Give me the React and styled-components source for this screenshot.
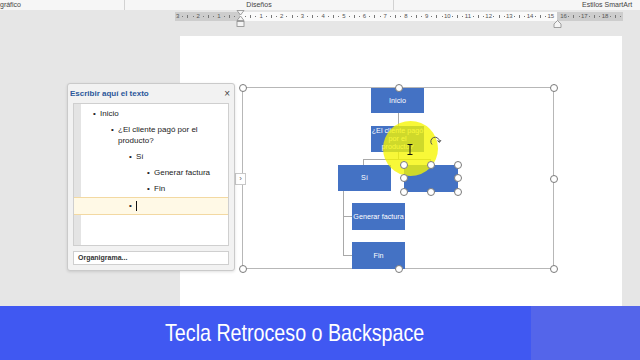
import styled, { createGlobalStyle } from 'styled-components';

const GlobalStyle = createGlobalStyle`
  * { box-sizing: border-box; }
  body { margin: 0; font-family: "Liberation Sans", Arial, sans-serif; }
`

const Screen = styled.div`
  width: 640px;
  height: 360px;
  display: flex;
  flex-direction: column;
  overflow: hidden;
  background: #e6e6e6;
`

// ribbon labels
const TopBar = styled.div`
  height: 10px;
  display: flex;
  background: #f6f6f6;
  font-size: 7px;
  line-height: 10px;
  color: #444;
`
const TopGroup = styled.div`
  width: ${p => p.$w ? p.$w + 'px' : 'auto'};
  flex: ${p => p.$w ? 'none' : 1};
  text-align: ${p => p.$align || 'left'};
  padding-left: ${p => p.$pad || 0}px;
  border-left: ${p => p.$sep ? '1px solid #d2d2d2' : 'none'};
  white-space: nowrap;
  overflow: hidden;
`

// ruler
const RulerRow = styled.div`
  height: 26px;
  position: relative;
  background: #e6e6e6;
  padding-top: 2px;
`
const Ruler = styled.div`
  margin-left: 175px;
  width: 446px;
  height: 9px;
  display: flex;
  font-size: 6px;
  line-height: 9px;
  color: #555;
`
const RulerSeg = styled.div`
  display: flex;
  width: ${p => p.$w ? p.$w + 'px' : 'auto'};
  flex: ${p => p.$w ? 'none' : 1};
  padding-left: ${p => p.$pad || 0}px;
  background: ${p => p.$light ? '#fafafa' : '#cdcdcd'};
`
const Cell = styled.div`
  width: 20.7px;
  flex: none;
  display: flex;
`
const Slot = styled.span`
  width: 25%;
  display: flex;
  align-items: center;
  justify-content: center;
`
const Dot = styled.i`
  width: 1px;
  height: 1px;
  background: #777;
`
const Tick = styled.i`
  width: 1px;
  height: 3px;
  background: #777;
`
const Marker = styled.svg`
  position: absolute;
  left: ${p => p.$x}px;
  top: ${p => p.$y}px;
`

// document area
const Workspace = styled.div`
  flex: 1;
  position: relative;
  display: flex;
  padding-left: 180px;
  background: #e6e6e6;
`
const Page = styled.div`
  width: 442px;
  background: #fff;
  padding: 51px 0 0 62px;
`
const Frame = styled.div`
  position: relative;
  width: 312px;
  height: 182px;
  border: 1px solid #b7b7b7;
`
const Node = styled.div`
  position: absolute;
  left: ${p => p.$x}px;
  top: ${p => p.$y}px;
  width: ${p => p.$w || 53}px;
  height: ${p => p.$h || 26}px;
  background: #4472c4;
  color: #fff;
  font-size: 7.2px;
  line-height: 8px;
  display: flex;
  align-items: center;
  justify-content: center;
  text-align: center;
`
const Line = styled.div`
  position: absolute;
  left: ${p => p.$x}px;
  top: ${p => p.$y}px;
  width: ${p => p.$w || 1}px;
  height: ${p => p.$h || 1}px;
  background: #a9a9a9;
`
const Handle = styled.span`
  position: absolute;
  left: ${p => p.$x - 4}px;
  top: ${p => p.$y - 4}px;
  width: 8px;
  height: 8px;
  border-radius: 50%;
  border: 1px solid #7a7a7a;
  background: #fff;
  z-index: 3;
`
const Spot = styled.div`
  position: absolute;
  left: 140px;
  top: 33px;
  width: 55px;
  height: 55px;
  border-radius: 50%;
  background: rgba(246, 246, 0, 0.78);
  z-index: 2;
`
const Overlay = styled.svg`
  position: absolute;
  left: ${p => p.$x}px;
  top: ${p => p.$y}px;
  z-index: 4;
`
const ExpandTab = styled.div`
  position: absolute;
  left: -8px;
  top: 85px;
  width: 11px;
  height: 12px;
  background: #fff;
  border: 1px solid #c8c8c8;
  color: #666;
  font-size: 8px;
  line-height: 10px;
  text-align: center;
  z-index: 3;
`

// text pane
const TextPane = styled.div`
  position: absolute;
  left: 67px;
  top: 47px;
  width: 168px;
  height: 188px;
  display: flex;
  flex-direction: column;
  padding: 0 5px 5px;
  background: #f2f2f2;
  border: 1px solid #cacaca;
  border-radius: 3px;
  box-shadow: 0 1px 3px rgba(0,0,0,0.12);
  z-index: 5;
`
const PaneHeader = styled.div`
  height: 19px;
  display: flex;
  align-items: center;
  justify-content: space-between;
  margin: 0 -3px;
`
const PaneTitle = styled.span`
  font-size: 8px;
  font-weight: bold;
  color: #2b579a;
`
const Close = styled.span`
  font-size: 10px;
  color: #444;
  padding-right: 2px;
`
const InnerBox = styled.div`
  height: 144px;
  background: #fff;
  border: 1px solid #cfcfcf;
  display: flex;
  flex-direction: column;
`
const List = styled.div`
  flex: 1;
  border-left: 7px solid #e4e4e4;
  padding-top: 2px;
  font-size: 8px;
  color: #222;
`
const Item = styled.div`
  display: flex;
  line-height: 11px;
  padding: 2.5px 0 2.5px ${p => 12 + p.$level * 18 + (p.$active ? 7 : 0)}px;
  margin-left: ${p => p.$active ? -7 : 0}px;
  background: ${p => p.$active ? '#fff9e6' : 'transparent'};
  border-top: ${p => p.$active ? '1px solid #f3d9a2' : 'none'};
  border-bottom: ${p => p.$active ? '1px solid #f3d9a2' : 'none'};
  &::before {
    content: "•";
    width: 7px;
    flex: none;
  }
`
const ItemText = styled.span`
  max-width: 92px;
`
const Caret = styled.i`
  width: 1px;
  height: 10px;
  background: #111;
  align-self: center;
`
const Footer = styled.div`
  margin-top: 5px;
  height: 14px;
  background: #fff;
  border: 1px solid #cfcfcf;
  padding-left: 4px;
  font-size: 7px;
  font-weight: bold;
  color: #333;
  line-height: 12px;
`

// caption banner
const Banner = styled.div`
  height: 54px;
  display: flex;
  background: #4058f2;
`
const Caption = styled.div`
  flex: 1;
  display: flex;
  align-items: center;
  padding-left: 165px;
`
const CaptionText = styled.span`
  color: #fff;
  font-size: 24px;
  white-space: nowrap;
  transform: scaleX(0.82);
  transform-origin: left center;
`
const SidePanel = styled.div`
  width: 109px;
  background: #5465ea;
`

const leftNums = [3, 2, 1];
const mainNums = Array.from({ length: 15 }, (_, i) => i + 1);
const rightNums = [16, 17, 18];

function TickCell({ n, first }) {
  return first ? (
    <Cell><Slot>{n}</Slot><Slot><Dot /></Slot><Slot><Tick /></Slot><Slot><Dot /></Slot></Cell>
  ) : (
    <Cell><Slot><Dot /></Slot><Slot><Tick /></Slot><Slot><Dot /></Slot><Slot>{n}</Slot></Cell>
  );
}

const frameHandles = [
  [0, 0], [156, 0], [311, 0], [311, 91], [0, 181], [156, 181], [311, 181],
];
const boxHandles = [
  [161, 77], [188, 77], [215, 77], [161, 90], [215, 90], [161, 104], [188, 104], [215, 104],
];

function App() {
  return (
    <Screen>
      <GlobalStyle />
      <TopBar>
        <TopGroup $w={124}>gráfico</TopGroup>
        <TopGroup $w={269} $align="center" $sep>Diseños</TopGroup>
        <TopGroup $pad={188} $sep>Estilos SmartArt</TopGroup>
      </TopBar>

      <RulerRow>
        <Ruler>
          <RulerSeg $w={65}>
            {leftNums.map(n => <TickCell key={n} n={n} first />)}
          </RulerSeg>
          <RulerSeg $w={317} $pad={3} $light>
            {mainNums.map(n => <TickCell key={n} n={n} />)}
          </RulerSeg>
          <RulerSeg $pad={4}>
            {rightNums.map(n => <TickCell key={n} n={n} first />)}
          </RulerSeg>
        </Ruler>
        <Marker $x={236} $y={0} width="9" height="17" viewBox="0 0 9 17">
          <path d="M1 0.5 H8 L4.5 5 Z M4.5 6 L1 10.5 H8 Z" fill="#f4f4f4" stroke="#8a8a8a" strokeWidth="0.8" />
          <rect x="1" y="11.5" width="7" height="5" fill="#f4f4f4" stroke="#8a8a8a" strokeWidth="0.8" />
        </Marker>
        <Marker $x={553} $y={10} width="9" height="8" viewBox="0 0 9 8">
          <path d="M4.5 0.5 L8 4 V7.5 H1 V4 Z" fill="#f4f4f4" stroke="#8a8a8a" strokeWidth="0.8" />
        </Marker>
      </RulerRow>

      <Workspace>
        <Page>
          <Frame>
            <Line $x={155} $y={25} $h={13} />
            <Line $x={155} $y={64} $h={8} />
            <Line $x={120} $y={71} $w={68} />
            <Line $x={120} $y={71} $h={7} />
            <Line $x={187} $y={71} $h={7} />
            <Line $x={100} $y={103} $h={65} />
            <Line $x={100} $y={128} $w={9} />
            <Line $x={100} $y={167} $w={9} />

            <Node $x={128} $y={0} $h={25}>Inicio</Node>
            <Node $x={128} $y={38}>¿El cliente pagó<br />por el<br />producto?</Node>
            <Node $x={95} $y={77}>Sí</Node>
            <Node $x={161} $y={77} $w={54} $h={27} />
            <Node $x={109} $y={115} $h={27}>Generar factura</Node>
            <Node $x={109} $y={154} $h={27}>Fin</Node>

            <Spot />
            <Overlay $x={186} $y={47} width="13" height="12" viewBox="0 0 13 12">
              <path d="M3 9.5 A4.3 4.3 0 1 1 10.4 6.8" fill="none" stroke="#555" strokeWidth="1" />
              <path d="M8.4 5.6 L10.5 7.4 L12 5" fill="none" stroke="#555" strokeWidth="1" />
            </Overlay>
            <Overlay $x={164} $y={56} width="6" height="11" viewBox="0 0 6 11">
              <path d="M0.5 0.5 H5.5 M3 0.5 V10.5 M0.5 10.5 H5.5" fill="none" stroke="#111" strokeWidth="1" />
            </Overlay>

            {frameHandles.map(([x, y]) => <Handle key={`f${x}-${y}`} $x={x} $y={y} />)}
            {boxHandles.map(([x, y]) => <Handle key={`b${x}-${y}`} $x={x} $y={y} />)}
            <ExpandTab>›</ExpandTab>
          </Frame>
        </Page>

        <TextPane>
          <PaneHeader>
            <PaneTitle>Escribir aquí el texto</PaneTitle>
            <Close>×</Close>
          </PaneHeader>
          <InnerBox>
            <List>
              <Item $level={0}><ItemText>Inicio</ItemText></Item>
              <Item $level={1}><ItemText>¿El cliente pagó por el producto?</ItemText></Item>
              <Item $level={2}><ItemText>Sí</ItemText></Item>
              <Item $level={3}><ItemText>Generar factura</ItemText></Item>
              <Item $level={3}><ItemText>Fin</ItemText></Item>
              <Item $level={2} $active><Caret /></Item>
            </List>
          </InnerBox>
          <Footer>Organigrama...</Footer>
        </TextPane>
      </Workspace>

      <Banner>
        <Caption>
          <CaptionText>Tecla Retroceso o Backspace</CaptionText>
        </Caption>
        <SidePanel />
      </Banner>
    </Screen>
  );
}
export default App;
